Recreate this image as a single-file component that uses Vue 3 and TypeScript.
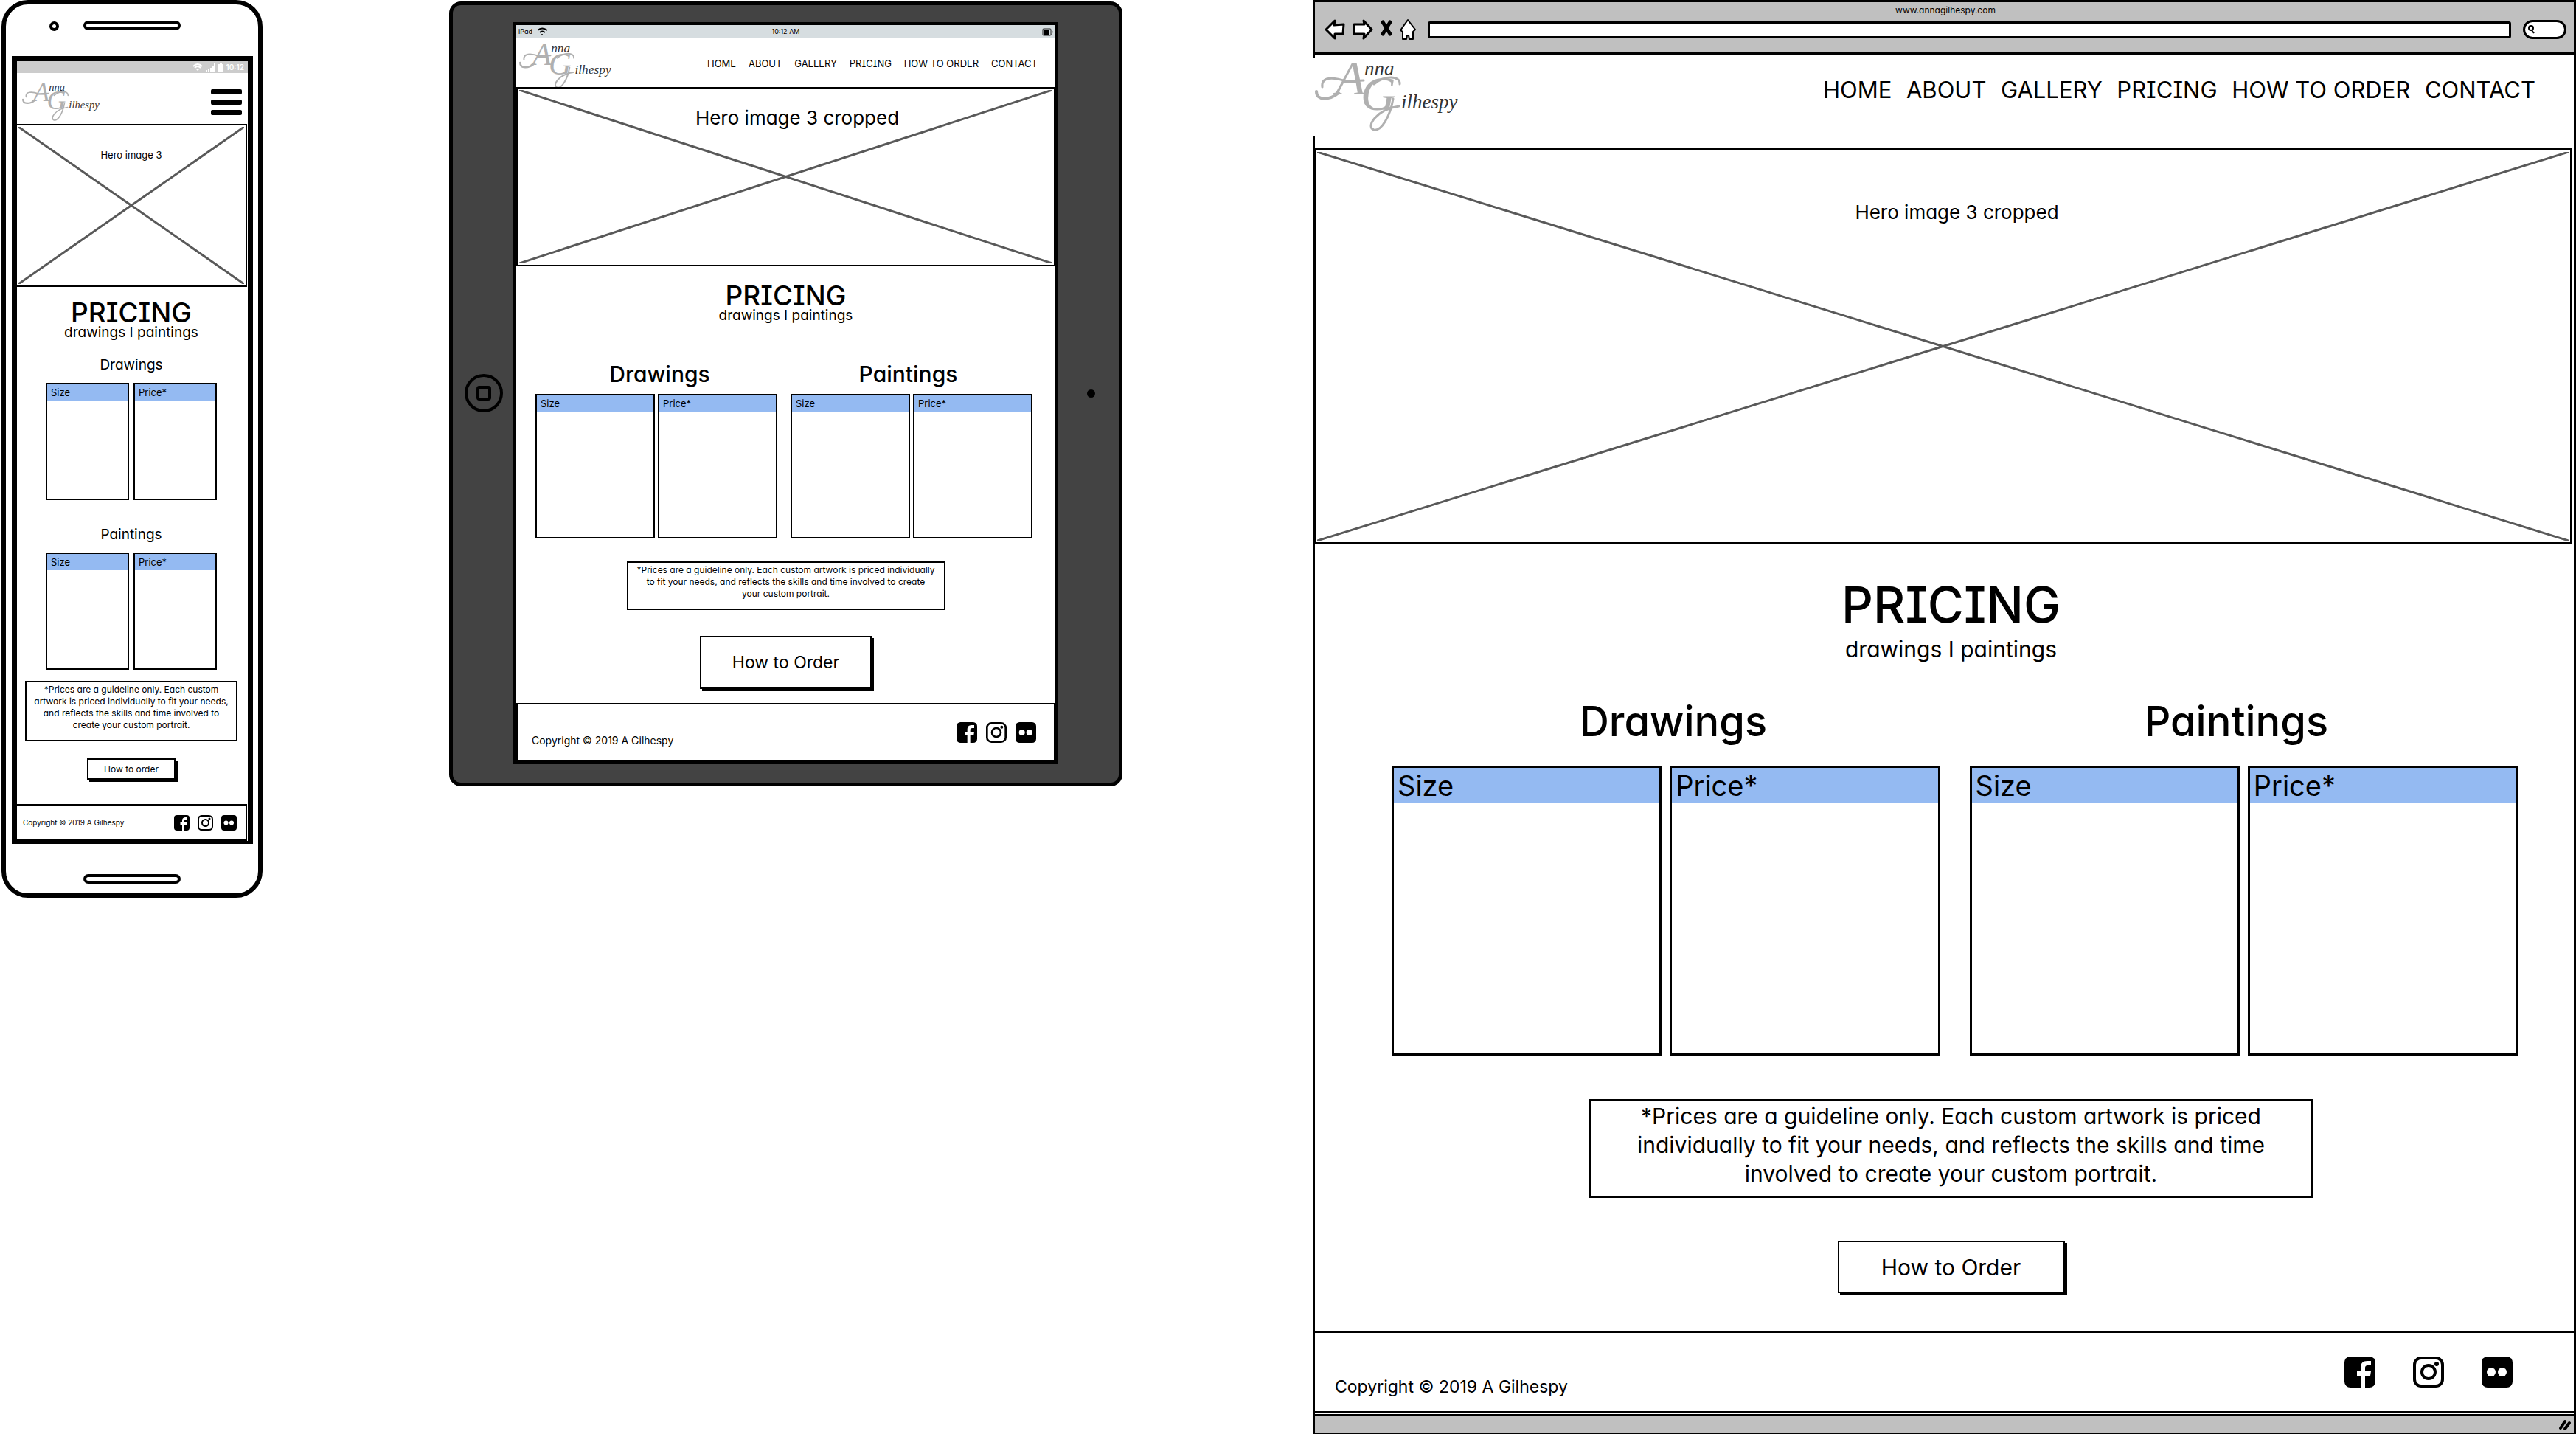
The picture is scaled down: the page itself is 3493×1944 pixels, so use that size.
<script setup lang="ts">
type Kind = 'phone' | 'tablet' | 'browser'

interface Device {
  kind: Kind
  hero: string
  cta: string
}

const devices: Device[] = [
  { kind: 'phone', hero: 'Hero image 3', cta: 'How to order' },
  { kind: 'tablet', hero: 'Hero image 3 cropped', cta: 'How to Order' },
  { kind: 'browser', hero: 'Hero image 3 cropped', cta: 'How to Order' },
]

const links: string[] = ['HOME', 'ABOUT', 'GALLERY', 'PRICING', 'HOW TO ORDER', 'CONTACT']
const priceLists: string[] = ['Drawings', 'Paintings']
</script>

<template>
  <main class="board">
    <section v-for="d in devices" :key="d.kind" :class="['device', d.kind]" :aria-label="d.kind">
      <div v-if="d.kind === 'phone'" class="phone-top">
        <span class="camera"></span>
        <span class="speaker"></span>
      </div>

      <div v-if="d.kind === 'tablet'" class="bezel bezel-left">
        <svg class="home-button" viewBox="0 0 52 52" fill="none" stroke="#000" stroke-width="4">
          <circle cx="26" cy="26" r="24" />
          <rect x="18" y="18" width="16" height="16" rx="2" />
        </svg>
      </div>

      <header v-if="d.kind === 'browser'" class="chrome">
        <p class="chrome-title">www.annagilhespy.com</p>
        <div class="toolbar">
          <button class="tool" type="button" aria-label="Back">
            <svg width="28" height="28" viewBox="0 0 28 28" fill="#fff" stroke="#000" stroke-width="3" stroke-linejoin="round">
              <path d="M2 14 L14 2 L13 8 L26 7 L25 20 L14 20 L14 26 Z" />
            </svg>
          </button>
          <button class="tool" type="button" aria-label="Forward">
            <svg width="28" height="28" viewBox="0 0 28 28" fill="#fff" stroke="#000" stroke-width="3" stroke-linejoin="round">
              <path d="M26 14 L15 2 L16 7 L2 7 L2 20 L16 20 L15 26 Z" />
            </svg>
          </button>
          <button class="tool" type="button" aria-label="Stop">
            <svg width="16" height="28" viewBox="0 0 16 28" fill="none" stroke="#000" stroke-width="5" stroke-linecap="round">
              <path d="M3 4 L13 20 M13 4 L3 20" />
            </svg>
          </button>
          <button class="tool" type="button" aria-label="Home">
            <svg width="22" height="30" viewBox="0 0 22 30" fill="#fff" stroke="#000" stroke-width="2" stroke-linejoin="round">
              <path d="M11 2 L21 15 L18 18 L18 28 L13 28 L12 23 L10 23 L9 28 L4 28 L4 18 L1 16 Z" />
            </svg>
          </button>
          <input class="address" type="text" aria-label="Address" />
          <label class="search">
            <svg width="12" height="14" viewBox="0 0 12 14" fill="none" stroke="#000" stroke-width="2">
              <circle cx="5" cy="5" r="3" />
              <path d="M6 8 L9 12" />
            </svg>
            <input type="text" aria-label="Search" />
          </label>
        </div>
      </header>

      <div class="screen">
        <div v-if="d.kind === 'phone'" class="status">
          <svg width="14" height="11" viewBox="0 0 14 11" fill="none" stroke="#fff" stroke-width="2">
            <path d="M1 4 Q7 -2 13 4 M3 6 Q7 2 11 6" />
            <path d="M5 8 L7 10 L9 8 Z" fill="#fff" stroke="none" />
          </svg>
          <svg width="13" height="11" viewBox="0 0 13 11" fill="#fff">
            <path d="M0 9h2v2h-2z M3 8h2v3h-2z M6 6h2v5h-2z M9 3h2v8h-2z M11 0h2v11h-2z" />
          </svg>
          <svg width="7" height="11" viewBox="0 0 7 11" fill="#fff">
            <path d="M2 0h3v1h2v10h-7v-10h2z" />
          </svg>
          <span>10:12</span>
        </div>
        <div v-if="d.kind === 'tablet'" class="status">
          <span class="status-side">
            iPad
            <svg width="15" height="12" viewBox="0 0 15 12" fill="none" stroke="#000" stroke-width="2">
              <path d="M1 4 Q7 -1 14 4 M4 7 Q7 4 11 7" />
              <circle cx="7" cy="10" r="1" fill="#000" stroke="none" />
            </svg>
          </span>
          <span>10:12 AM</span>
          <span class="status-side end">
            <svg width="15" height="11" viewBox="0 0 15 11" fill="none" stroke="#222" stroke-width="1">
              <rect x="1" y="1" width="11" height="9" rx="1" />
              <rect x="3" y="2" width="7" height="7" fill="#000" stroke="none" />
              <path d="M13 2 Q15 5 13 9" />
            </svg>
          </span>
        </div>

        <header class="site-header">
          <a class="logo" href="#" aria-label="Anna Gilhespy">
            <svg viewBox="0 0 194 98">
              <g fill="none" stroke="#b0b0b0" stroke-width="4" stroke-linecap="round">
                <path d="M32 44 C20 54 2 55 2 42" />
                <path d="M10 36 C8 22 24 22 42 28 L66 27" stroke-width="3" />
                <path d="M106 52 C102 76 90 96 80 94 C68 90 84 66 114 62" stroke-width="3" />
                <path d="M80 32 C94 20 116 20 115 32" stroke-width="3" />
              </g>
              <text class="initial" x="28" y="46">A</text>
              <text class="initial" x="62" y="67">G</text>
              <text class="rest" x="67" y="20">nna</text>
              <text class="rest" x="117" y="65">ilhespy</text>
            </svg>
          </a>
          <button v-if="d.kind === 'phone'" class="burger" type="button" aria-label="Menu">
            <i></i><i></i><i></i>
          </button>
          <nav v-else class="nav">
            <a v-for="l in links" :key="l" href="#">{{ l }}</a>
          </nav>
        </header>

        <div class="hero">
          <svg class="cross" viewBox="0 0 100 100" preserveAspectRatio="none">
            <path d="M0 0 L100 100 M100 0 L0 100" vector-effect="non-scaling-stroke" />
          </svg>
          <p>{{ d.hero }}</p>
        </div>

        <div class="content">
          <h1>PRICING</h1>
          <p class="sub">drawings I paintings</p>

          <div class="lists">
            <div v-for="p in priceLists" :key="p" class="list">
              <h2 :id="`${d.kind}-${p}`">{{ p }}</h2>
              <table :aria-labelledby="`${d.kind}-${p}`">
                <thead>
                  <tr>
                    <th scope="col">Size</th>
                    <th scope="col">Price*</th>
                  </tr>
                </thead>
                <tbody>
                  <tr>
                    <td></td>
                    <td></td>
                  </tr>
                </tbody>
              </table>
            </div>
          </div>

          <p class="note">
            *Prices are a guideline only. Each custom artwork is priced individually to fit your needs,
            and reflects the skills and time involved to create your&nbsp;custom portrait.
          </p>
          <button class="cta" type="button">{{ d.cta }}</button>
        </div>

        <footer class="site-footer">
          <p>Copyright © 2019 A Gilhespy</p>
          <div class="social">
            <a href="#" aria-label="Facebook">
              <svg viewBox="0 0 42 42">
                <rect width="42" height="42" rx="8" />
                <path fill="#fff" d="M22 42 V26 H17 V20 H22 V15 C22 9 25 6 31 6 H36 V12 H32 C29 12 28 13 28 16 V20 H36 L35 26 H28 V42 Z" />
              </svg>
            </a>
            <a href="#" aria-label="Instagram">
              <svg viewBox="0 0 42 42" fill="none" stroke="#000" stroke-width="4">
                <rect x="2" y="2" width="38" height="38" rx="9" />
                <circle cx="21" cy="21" r="9" />
                <circle cx="32" cy="10" r="3" fill="#000" stroke="none" />
              </svg>
            </a>
            <a href="#" aria-label="Flickr">
              <svg viewBox="0 0 42 42">
                <rect width="42" height="42" rx="8" />
                <circle cx="13" cy="21" r="6" fill="#fff" />
                <circle cx="28" cy="21" r="6" fill="#fff" />
              </svg>
            </a>
          </div>
        </footer>
      </div>

      <div v-if="d.kind === 'phone'" class="phone-bottom">
        <span class="speaker"></span>
      </div>
      <div v-if="d.kind === 'tablet'" class="bezel bezel-right">
        <span class="lens"></span>
      </div>
      <div v-if="d.kind === 'browser'" class="chrome-bottom">
        <svg width="18" height="16" viewBox="0 0 18 16" stroke="#000" stroke-width="4" stroke-linecap="round">
          <path d="M3 12 L9 3 M9 13 L15 5" />
        </svg>
      </div>
    </section>
  </main>
</template>

<style>
body {
  margin: 0;
  background: #fff;
}
</style>

<style scoped>
.board {
  display: grid;
  grid-template-columns: 354fr 253px 913fr 258px 1713fr;
  align-items: start;
  padding-left: 2px;
  color: #000;
  font-family: Inter, "Open Sans", sans-serif;
  font-feature-settings: "cv11", "cv08";
}

.board * {
  box-sizing: border-box;
}

p,
h1,
h2 {
  margin: 0;
  font-weight: 400;
}

h1,
h2 {
  font-weight: 500;
}

a {
  color: inherit;
  text-decoration: none;
}

svg {
  display: block;
}

button,
input {
  font: inherit;
  font-feature-settings: inherit;
  color: inherit;
}

/* per-device measures */
.phone {
  --line: 2px;
  --small: 12px;
  --h1: 37px;
  --h1-line: 34px;
  --sub: 19px;
  --sub-line: 20px;
  --h2: 19px;
  --h2-line: 24px;
  --cell: 13px;
  --gutter: 6px;
  --inset: 0px;
}

.tablet {
  grid-column: 3;
  --line: 2px;
  --small: 12px;
  --h1: 37px;
  --h1-line: 34px;
  --sub: 19px;
  --sub-line: 20px;
  --h2: 30px;
  --h2-line: 36px;
  --cell: 13px;
  --gutter: 4px;
  --inset: 9px;
}

.browser {
  grid-column: 5;
  --line: 3px;
  --small: 30px;
  --h1: 67px;
  --h1-line: 76px;
  --sub: 30px;
  --sub-line: 32px;
  --h2: 56px;
  --h2-line: 64px;
  --cell: 38px;
  --gutter: 11px;
  --inset: 20px;
}

/* phone shell */
.phone {
  border: 6px solid #000;
  border-radius: 36px;
  background: #fff;
}

.phone-top {
  position: relative;
  display: flex;
  justify-content: center;
  height: 70px;
  padding-top: 22px;
}

.phone-bottom {
  display: flex;
  justify-content: center;
  height: 67px;
  padding-top: 41px;
}

.speaker {
  width: 132px;
  height: 13px;
  border: 4px solid #000;
  border-radius: 8px;
}

.camera {
  position: absolute;
  left: 59px;
  top: 23px;
  width: 13px;
  height: 13px;
  border: 4px solid #000;
  border-radius: 50%;
}

.phone .screen {
  margin: 0 7px 0 8px;
  border: 7px solid #000;
  border-bottom-width: 4px;
}

/* tablet shell */
.tablet {
  display: flex;
  margin-top: 2px;
  padding: 23px 0 25px;
  border: 5px solid #000;
  border-radius: 16px;
  background: #434343;
}

.tablet .screen {
  flex: 1;
  border: 4px solid #000;
  background: #fff;
}

.bezel {
  display: flex;
  align-items: center;
  justify-content: center;
  width: 82px;
}

.bezel-left {
  padding-left: 2px;
}

.bezel-right {
  padding-left: 6px;
}

.home-button {
  width: 52px;
  height: 52px;
}

.lens {
  width: 11px;
  height: 11px;
  border-radius: 50%;
  background: #000;
}

/* browser shell */
.browser {
  border: 3px solid #000;
}

.chrome {
  padding: 3px 10px 13px 13px;
  border-bottom: 3px solid #000;
  background: #c0c0c0;
}

.chrome-title {
  font-size: 12px;
  line-height: 16px;
  text-align: center;
}

.toolbar {
  display: flex;
  align-items: center;
  gap: 10px;
  height: 36px;
}

.tool {
  padding: 0;
  border: 0;
  background: none;
}

.address {
  flex: 1;
  min-width: 0;
  height: 23px;
  margin: 0 6px;
  padding: 0 8px;
  border: 3px solid #000;
  border-radius: 3px;
  background: #fff;
}

.search {
  display: flex;
  align-items: center;
  width: 59px;
  height: 26px;
  padding-left: 3px;
  border: 3px solid #000;
  border-radius: 13px;
  background: #fff;
}

.search input {
  width: 36px;
  height: 16px;
  padding: 0;
  border: 0;
  background: none;
}

.chrome-bottom {
  display: flex;
  align-items: center;
  justify-content: flex-end;
  height: 26px;
  margin-top: 1px;
  padding-right: 3px;
  border-top: 3px solid #000;
  background: #c0c0c0;
}

/* status bars */
.status {
  display: flex;
  align-items: center;
}

.phone .status {
  justify-content: flex-end;
  gap: 4px;
  height: 16px;
  padding-right: 5px;
  background: #ccc;
  color: #fff;
  font-size: 10px;
  font-weight: 600;
  line-height: 16px;
}

.tablet .status {
  height: 18px;
  padding: 0 3px;
  background: #d6dde0;
  font-size: 9px;
  line-height: 16px;
}

.status-side {
  display: flex;
  flex: 1;
  align-items: center;
  gap: 6px;
}

.status-side.end {
  justify-content: flex-end;
}

/* site header */
.site-header {
  display: flex;
  align-items: flex-start;
  justify-content: space-between;
}

.phone .site-header {
  height: 69px;
  padding: 13px 8px 0 7px;
}

.tablet .site-header {
  height: 66px;
  padding: 6px 24px 0 4px;
}

.browser .site-header {
  height: 127px;
  padding: 5px 52px 0 0;
}

.logo svg {
  width: 105px;
  overflow: visible;
}

.tablet .logo svg {
  width: 125px;
}

.browser .logo {
  height: 105px;
  margin-left: -3px;
  padding: 3px 0 0 3px;
  background: #fff;
}

.browser .logo svg {
  width: 194px;
}

.logo text {
  font-family: "Liberation Serif", serif;
  font-style: italic;
}

.initial {
  font-size: 66px;
  fill: #b0b0b0;
}

.rest {
  font-size: 27px;
  fill: #333;
}

.burger {
  display: flex;
  flex-direction: column;
  gap: 7px;
  width: 42px;
  margin-top: 9px;
  padding: 0;
  border: 0;
  background: none;
}

.burger i {
  height: 7px;
  border-radius: 2px;
  background: #000;
}

.nav {
  display: flex;
  justify-content: space-between;
  width: 448px;
  padding-top: 18px;
  font-size: 13px;
  line-height: 20px;
}

.browser .nav {
  width: 966px;
  padding-top: 23px;
  font-size: 31px;
  line-height: 40px;
}

/* hero */
.hero {
  position: relative;
  height: 221px;
  padding-top: 30px;
  border: var(--line) solid #000;
  font-size: 13px;
  line-height: 20px;
  text-align: center;
}

.hero p {
  position: relative;
}

.phone .hero {
  margin: 0 1px 0 -2px;
}

.tablet .hero {
  height: 243px;
  padding: 24px 0 0 31px;
  font-size: 26px;
  line-height: 32px;
}

.browser .hero {
  height: 537px;
  margin: 0 2px 0 -2px;
  padding: 68px 0 0 38px;
  font-size: 26px;
  line-height: 32px;
}

.cross {
  position: absolute;
  inset: 0;
  width: 100%;
  height: 100%;
  padding: 2px;
  fill: none;
  stroke: #595959;
  stroke-width: 3px;
}

/* pricing */
.content {
  display: flex;
  flex-direction: column;
  align-items: center;
  text-align: center;
}

.phone .content {
  padding: 18px 3px 33px 0;
}

.tablet .content {
  padding: 23px 0 19px;
}

.browser .content {
  padding: 44px 0 51px 18px;
}

h1 {
  font-size: var(--h1);
  line-height: var(--h1-line);
}

.sub {
  font-size: var(--sub);
  font-feature-settings: "cv11";
  line-height: var(--sub-line);
}

.browser .sub {
  margin-top: 6px;
}

h2 {
  font-size: var(--h2);
  line-height: var(--h2-line);
}

.phone h2 {
  font-weight: 400;
}

.lists {
  display: flex;
  align-self: stretch;
}

.list {
  flex: 1;
}

.phone .lists {
  flex-direction: column;
  gap: 35px;
  margin: 22px 39px 0;
}

.tablet .lists {
  margin: 51px 31px 0 26px;
}

.browser .lists {
  margin: 50px 76px 0 86px;
}

table {
  width: calc(100% - var(--inset) + 2 * var(--gutter));
  margin: 12px calc(-1 * var(--gutter)) 0;
  border-collapse: separate;
  border-spacing: var(--gutter) 0;
  table-layout: fixed;
}

.tablet table {
  margin-top: 9px;
}

.browser table {
  margin-top: 28px;
}

.list:last-child table {
  margin-left: calc(var(--inset) - var(--gutter));
}

th {
  height: 24px;
  padding: 0 5px;
  border: var(--line) solid #000;
  border-bottom: 0;
  background: #94baf2;
  font-size: var(--cell);
  font-weight: 400;
  line-height: 16px;
  text-align: left;
}

td {
  height: 135px;
  padding: 0;
  border: var(--line) solid #000;
  border-top: 0;
}

.tablet td {
  height: 172px;
}

.browser th {
  height: 51px;
  line-height: 40px;
}

.browser td {
  height: 342px;
}

.note {
  width: 288px;
  margin-top: 15px;
  padding: 2px 4px 12px;
  border: var(--line) solid #000;
  font-size: var(--small);
  line-height: 16px;
}

.tablet .note {
  width: 432px;
  margin-top: 31px;
  padding: 2px 9px 12px;
}

.browser .note {
  width: 981px;
  margin-top: 59px;
  padding: 1px 0 10px;
  line-height: 39px;
}

.cta {
  width: 120px;
  height: 29px;
  margin-top: 23px;
  padding: 0;
  border: var(--line) solid #000;
  background: #fff;
  box-shadow: 3px 3px 0 #000;
  font-size: 12px;
}

.tablet .cta {
  width: 233px;
  height: 72px;
  margin-top: 35px;
  font-size: 23px;
}

.browser .cta {
  width: 308px;
  height: 71px;
  margin-top: 58px;
  border-width: 2px;
  font-size: 30px;
}

/* site footer */
.site-footer {
  display: flex;
  align-items: center;
  justify-content: space-between;
  height: 50px;
  padding: 0 12px 0 8px;
  border: var(--line) solid #000;
  font-size: 10px;
  line-height: 16px;
}

.phone .site-footer {
  margin: 0 1px 0 -2px;
}

.social {
  display: flex;
  gap: 11px;
}

.social svg {
  width: 21px;
  height: 21px;
}

.tablet .site-footer {
  height: 79px;
  padding: 0 24px 0 19px;
  font-size: 14px;
}

.tablet .site-footer p {
  align-self: flex-end;
  margin-bottom: 18px;
}

.tablet .social {
  gap: 12px;
}

.tablet .social svg {
  width: 28px;
  height: 28px;
}

.browser .site-footer {
  height: 112px;
  padding: 0 83px 0 27px;
  border-width: 3px 0;
  font-size: 23px;
  line-height: 24px;
}

.browser .site-footer p {
  align-self: flex-end;
  margin-bottom: 21px;
}

.browser .social {
  gap: 51px;
}

.browser .social svg {
  width: 42px;
  height: 42px;
}
</style>
